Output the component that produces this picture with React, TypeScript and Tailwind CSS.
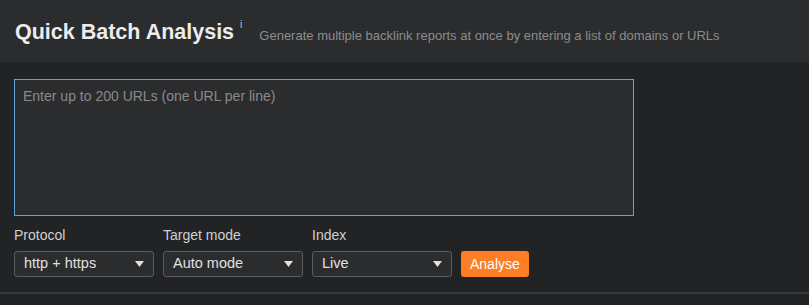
import { useState } from 'react'

const selects = [
  { label: 'Protocol', options: ['http + https', 'http', 'https'] },
  { label: 'Target mode', options: ['Auto mode', 'Exact URL', 'Prefix', 'Domain', 'Subdomains'] },
  { label: 'Index', options: ['Live', 'Recent', 'Historical'] },
]

function Select({ label, options }: { label: string; options: string[] }) {
  const [value, setValue] = useState(options[0])
  return (
    <div className="flex flex-col">
      <label className="text-[14px] leading-none text-[#d0d0d0] mb-[9px]">{label}</label>
      <div className="relative w-[140px]">
        <select
          value={value}
          onChange={e => setValue(e.target.value)}
          className="appearance-none w-full h-[26px] pl-[9px] pr-6 bg-[#2b2c2e] border border-[#5a5b5d] rounded-[3px] text-[14.5px] text-[#e0e0e0] outline-none"
        >
          {options.map(o => (
            <option key={o}>{o}</option>
          ))}
        </select>
        <svg className="absolute right-[10px] top-[10px] pointer-events-none" width="9" height="6" viewBox="0 0 9 6">
          <path d="M0 0 H9 L4.5 6 Z" fill="#e0e0e0" />
        </svg>
      </div>
    </div>
  )
}

export default function App() {
  return (
    <div className="min-h-[305px] bg-[#222325] font-['Liberation_Sans',Arial,sans-serif]">
      {/* header */}
      <div className="h-[62px] bg-[#2b2c2e] flex items-center px-[15px]">
        <h1 className="text-[21.5px] font-bold text-[#ececec] mt-[2px]">Quick Batch Analysis</h1>
        <span className="text-[10px] text-[#c4c4c4] ml-[6px] -mt-[14px]">i</span>
        <p className="ml-[17px] text-[13px] text-[#8c8c8c] mt-[10px]">
          Generate multiple backlink reports at once by entering a list of domains or URLs
        </p>
      </div>

      <div className="px-[14px] pt-[17px] pb-[15px] border-b-2 border-[#38393b]">
        <textarea
          placeholder="Enter up to 200 URLs (one URL per line)"
          className="block w-[620px] h-[137px] bg-[#2b2c2e] border border-[#5aa6d8] px-[8px] py-[6px] text-[14px] text-[#e0e0e0] placeholder:text-[#8a8a8a] outline-none resize-none"
        />

        <div className="flex items-end gap-[9px] mt-[12px]">
          {selects.map(s => (
            <Select key={s.label} label={s.label} options={s.options} />
          ))}
          <button className="h-[26px] px-[9px] rounded-[3px] bg-[#fd7e23] text-white text-[14px]">Analyse</button>
        </div>
      </div>
    </div>
  )
}
